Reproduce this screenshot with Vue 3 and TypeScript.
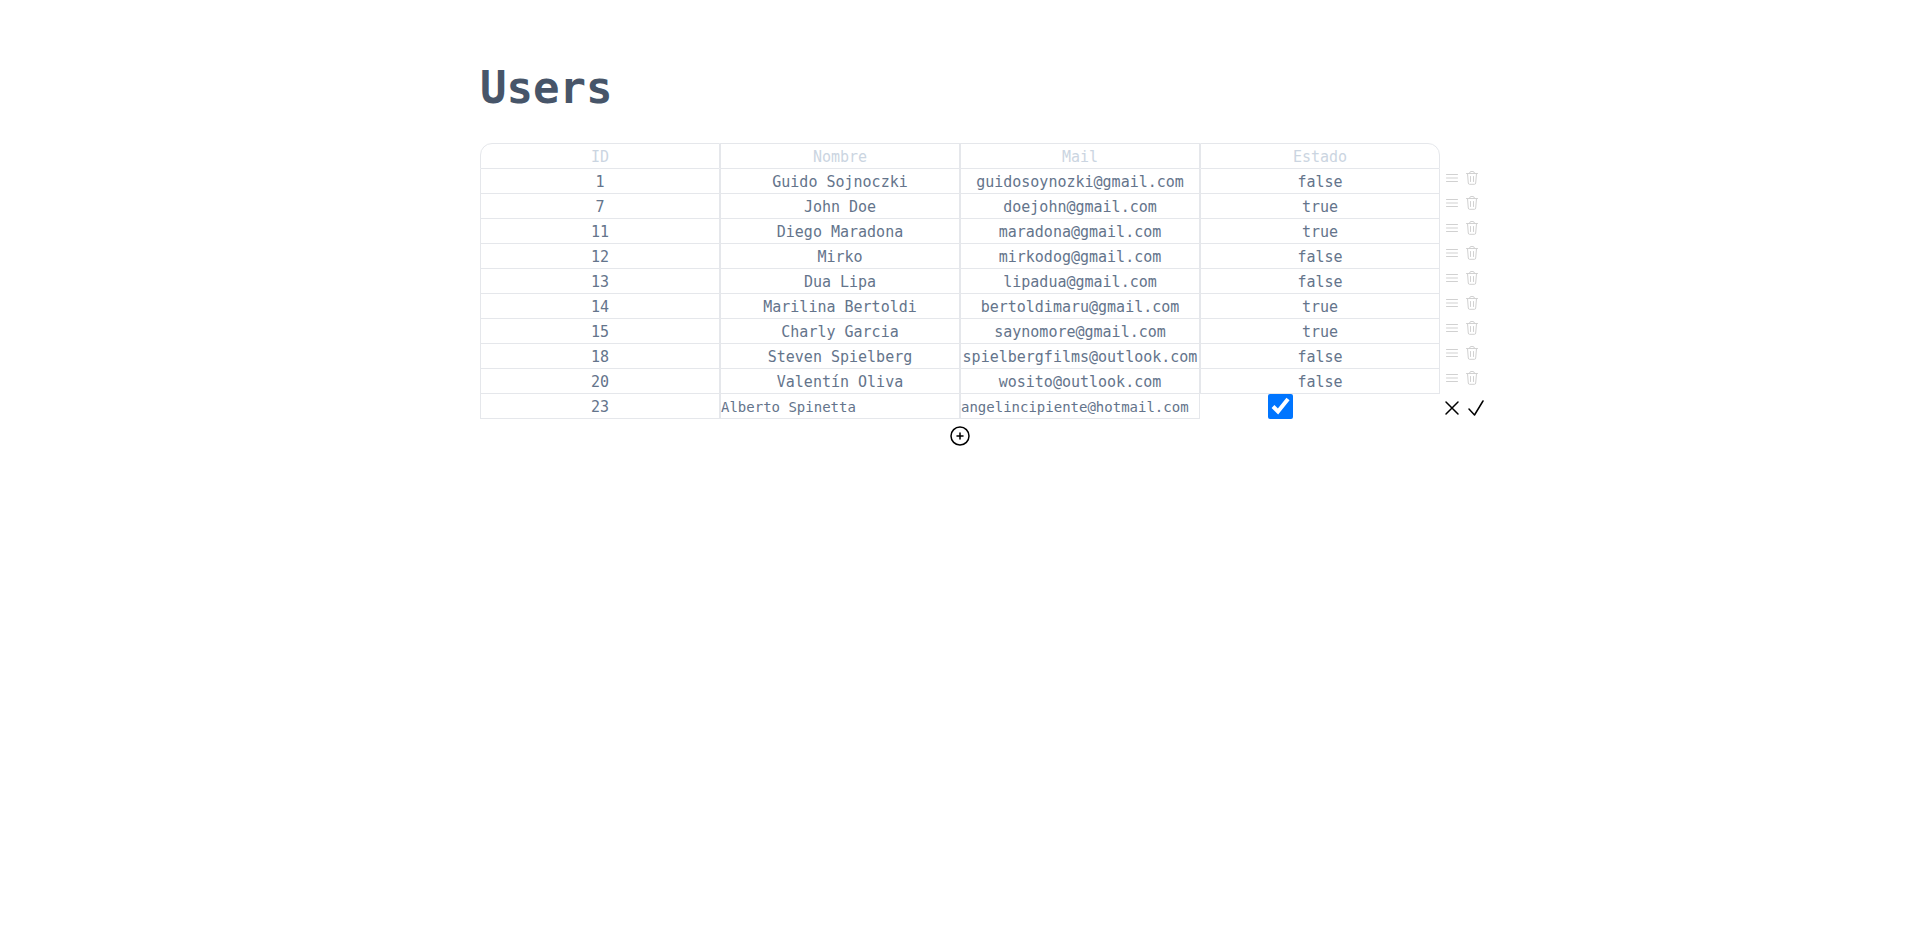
<script setup lang="ts">
import { reactive, ref } from 'vue'

interface User {
  id: number
  name: string
  mail: string
  active: boolean
}

const users = ref<User[]>([
  { id: 1, name: 'Guido Sojnoczki', mail: 'guidosoynozki@gmail.com', active: false },
  { id: 7, name: 'John Doe', mail: 'doejohn@gmail.com', active: true },
  { id: 11, name: 'Diego Maradona', mail: 'maradona@gmail.com', active: true },
  { id: 12, name: 'Mirko', mail: 'mirkodog@gmail.com', active: false },
  { id: 13, name: 'Dua Lipa', mail: 'lipadua@gmail.com', active: false },
  { id: 14, name: 'Marilina Bertoldi', mail: 'bertoldimaru@gmail.com', active: true },
  { id: 15, name: 'Charly Garcia', mail: 'saynomore@gmail.com', active: true },
  { id: 18, name: 'Steven Spielberg', mail: 'spielbergfilms@outlook.com', active: false },
  { id: 20, name: 'Valentín Oliva', mail: 'wosito@outlook.com', active: false },
])

const draft = reactive<User>({
  id: 23,
  name: 'Alberto Spinetta',
  mail: 'angelincipiente@hotmail.com',
  active: true,
})
</script>

<template>
  <main class="page">
    <h1 class="title">Users</h1>
    <table class="users">
      <colgroup>
        <col /><col /><col /><col />
        <col class="actions-col" />
      </colgroup>
      <thead>
        <tr>
          <th class="cell first" scope="col">ID</th>
          <th class="cell" scope="col">Nombre</th>
          <th class="cell" scope="col">Mail</th>
          <th class="cell last" scope="col">Estado</th>
          <td class="actions"></td>
        </tr>
      </thead>
      <tbody>
        <tr v-for="user in users" :key="user.id">
          <td class="cell">{{ user.id }}</td>
          <td class="cell">{{ user.name }}</td>
          <td class="cell">{{ user.mail }}</td>
          <td class="cell">{{ user.active }}</td>
          <td class="actions">
            <div class="tools">
              <button type="button" class="icon muted" aria-label="Editar">
                <svg width="16" height="16" viewBox="0 0 16 16">
                  <path d="M2.500 4.500h11M2.500 8h11M2.500 11.500h11" />
                </svg>
              </button>
              <button type="button" class="icon muted" aria-label="Eliminar">
                <svg width="16" height="16" viewBox="0 0 16 16">
                  <path d="M2.500 3.500h11M5.500 3.500q0-2 1.500-2h2q1.500 0 1.500 2M3.500 3.500l.8 9.500q.1 1.300 1.200 1.300h5q1.100 0 1.200-1.300l.8-9.500M6.500 6.500v5M9.500 6.500v5" />
                </svg>
              </button>
            </div>
          </td>
        </tr>
        <tr>
          <td class="cell">{{ draft.id }}</td>
          <td class="cell"><input v-model="draft.name" class="field" type="text" aria-label="Nombre" /></td>
          <td class="cell"><input v-model="draft.mail" class="field" type="text" aria-label="Mail" /></td>
          <td class="state"><input v-model="draft.active" class="check" type="checkbox" aria-label="Estado" /></td>
          <td class="actions">
            <div class="tools editing">
              <button type="button" class="icon" aria-label="Cancelar">
                <svg width="16" height="16" viewBox="0 0 16 16"><path d="M2 2l12 12M14 2L2 14" /></svg>
              </button>
              <button type="button" class="icon" aria-label="Guardar">
                <svg width="16" height="16" viewBox="0 0 16 16"><path d="M1 9l5.500 6L15 1" /></svg>
              </button>
            </div>
          </td>
        </tr>
      </tbody>
    </table>
    <button type="button" class="icon add" aria-label="Agregar usuario">
      <svg width="20" height="20" viewBox="0 0 20 20">
        <circle cx="10" cy="10" r="9" />
        <path d="M10 7v6M7 10h6" />
      </svg>
    </button>
  </main>
</template>

<style>
body {
  margin: 0;
  background: #fff;
}
</style>

<style scoped>
.page {
  --line: #e5e7eb;
  box-sizing: border-box;
  padding: 64px 25%;
  color: #64748b;
  font-family: Consolas, "DejaVu Sans Mono", monospace;
  font-size: 15px;
  line-height: 22px;
}

.title {
  margin: 0 0 31px;
  color: #475569;
  font-size: 44px;
  line-height: 48px;
  font-weight: 700;
}

.users {
  width: calc(100% + 60px);
  table-layout: fixed;
  border-collapse: separate;
  border-spacing: 0;
}

.actions-col {
  width: 60px;
}

.cell {
  padding: 2px 0 0;
  border: 1px solid var(--line);
  border-top: 0;
  text-align: center;
  white-space: nowrap;
}

th.cell {
  border-top: 1px solid var(--line);
  color: #cbd5e1;
  font-weight: 400;
}

.first {
  border-top-left-radius: 12px;
}

.last {
  border-top-right-radius: 12px;
}

.actions,
.state {
  padding: 0;
  vertical-align: top;
}

.state {
  padding-right: 80px;
}

.tools {
  display: flex;
  gap: 4px;
  padding: 1px 4px;
}

.tools.editing {
  gap: 8px;
  padding-top: 6px;
}

.icon {
  display: flex;
  padding: 0;
  border: 0;
  background: none;
  color: #000;
  cursor: pointer;
}

.icon svg {
  fill: none;
  stroke: currentColor;
  stroke-width: 1.5;
  stroke-linecap: round;
  stroke-linejoin: round;
}

.icon.muted {
  color: #d1d1d1;
}

.icon.muted svg {
  stroke-width: 1;
}

.field {
  display: block;
  box-sizing: border-box;
  width: 100%;
  height: 22px;
  padding: 0;
  border: 0;
  outline: 0;
  background: none;
  color: inherit;
  font-family: inherit;
  font-size: 14px;
}

.check {
  display: block;
  width: 25px;
  height: 25px;
  margin: 0 auto;
}

.add {
  margin: 7px auto 0;
}
</style>
